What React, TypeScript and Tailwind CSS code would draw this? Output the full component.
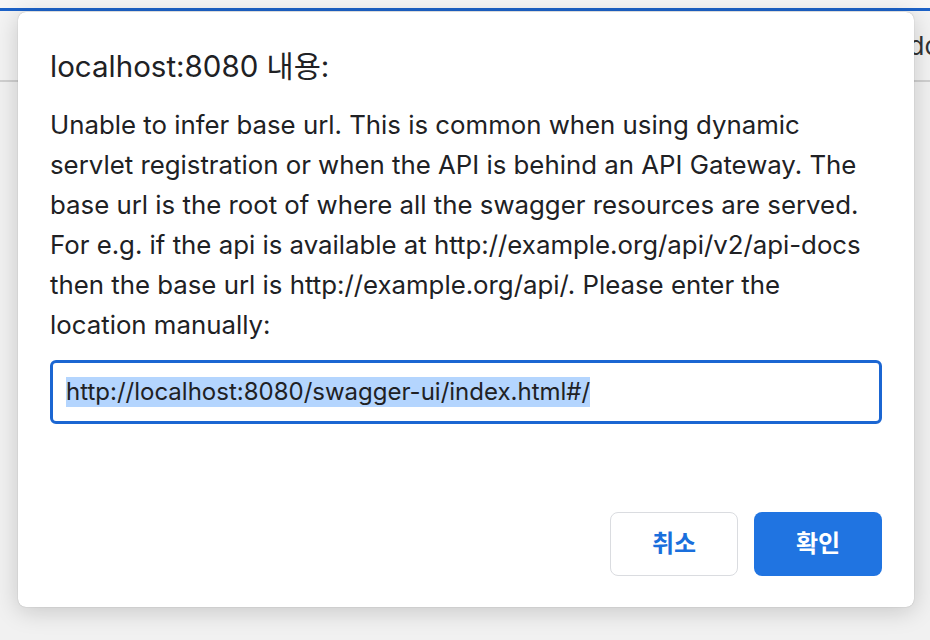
import React from "react";

export default function App() {
  const font = { fontFamily: 'Inter, "Noto Sans CJK KR", sans-serif' };
  return (
    <div className="relative w-[930px] h-[640px] overflow-hidden bg-[#f1f1f1]" style={font}>
      <div className="h-[8px] bg-[#f6f6f6]" />
      <div className="h-[3px] bg-[#1c62c8]" />
      <div className="h-[71px] bg-[#f3f3f3] border-b-2 border-[#d0d0d0] flex justify-end items-center pr-0">
        <span className="text-[26px] text-[#333] translate-x-[10px]">do</span>
      </div>
      <div className="absolute left-[18px] top-[12px] w-[896px] h-[595px] bg-white rounded-[8px] shadow-[0_4px_24px_rgba(0,0,0,0.18),0_0_1px_rgba(0,0,0,0.35)] flex flex-col px-[32px] pt-[38px] pb-[31px] text-[#202124]">
        <div className="text-[29.5px] leading-[32px]">localhost:8080 내용:</div>
        <div className="mt-[23px] text-[25.8px] leading-[40px]">
          Unable to infer base url. This is common when using dynamic servlet registration or when the API is behind an API Gateway. The base url is the root of where all the swagger resources are served. For e.g. if the api is available at http://example.org/api/v2/api-docs then the base url is http://example.org/api/. Please enter the location manually:
        </div>
        <div className="mt-[15px] h-[64px] border-[3px] border-[#1b66d2] rounded-[6px] flex items-center px-[13px]">
          <span className="bg-[#b4d5fe] text-[24px] leading-[30px] text-[#202124]">http://localhost:8080/swagger-ui/index.html#/</span>
        </div>
        <div className="mt-auto flex justify-end gap-[16px]">
          <button className="w-[128px] h-[64px] rounded-[8px] border border-[#dadce0] bg-white text-[#1a6fdc] text-[24px] font-bold">취소</button>
          <button className="w-[128px] h-[64px] rounded-[8px] bg-[#2074e1] text-white text-[24px] font-bold">확인</button>
        </div>
      </div>
    </div>
  );
}
